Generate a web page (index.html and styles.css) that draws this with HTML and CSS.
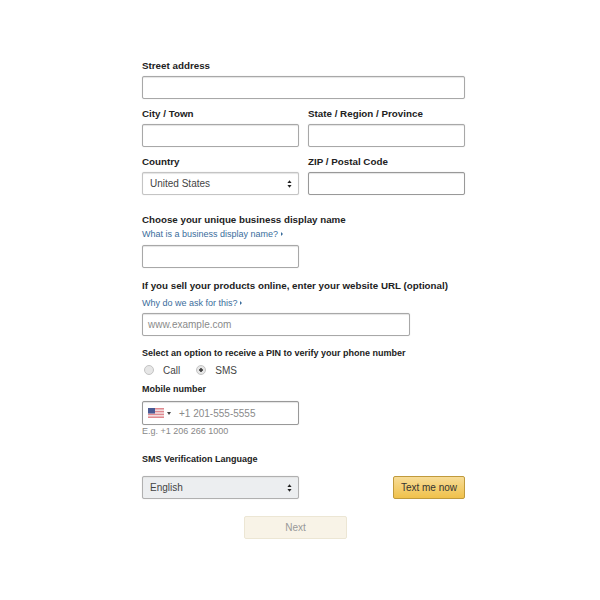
FILE: index.html
```html
<!DOCTYPE html>
<html lang="en">
<head>
<meta charset="UTF-8">
<title>Business address</title>
<link rel="stylesheet" href="styles.css">
</head>
<body>
<form class="form">
  <div class="label label-first">Street address</div>
  <div class="field field-wide"></div>

  <div class="cols">
    <div class="col">
      <div class="label">City / Town</div>
      <div class="field"></div>
    </div>
    <div class="col">
      <div class="label">State / Region / Province</div>
      <div class="field"></div>
    </div>
  </div>

  <div class="cols">
    <div class="col">
      <div class="label">Country</div>
      <div class="field select">United States
        <svg class="updown" viewBox="0 0 6 9"><path d="M3 0 5.5 3.2H.5zM3 9 .5 5.8h5z"/></svg>
      </div>
    </div>
    <div class="col">
      <div class="label">ZIP / Postal Code</div>
      <div class="field field-dark"></div>
    </div>
  </div>

  <div class="heading display-name">Choose your unique business display name</div>
  <a class="help help-tight">What is a business display name? <span class="caret"></span></a>
  <div class="field field-half"></div>

  <div class="heading website">If you sell your products online, enter your website URL (optional)</div>
  <a class="help">Why do we ask for this? <span class="caret"></span></a>
  <div class="field field-url placeholder">www.example.com</div>

  <div class="small-heading pin">Select an option to receive a PIN to verify your phone number</div>
  <div class="radios">
    <span class="radio"></span><span class="radio-text">Call</span>
    <span class="radio radio-on"></span><span class="radio-text">SMS</span>
  </div>

  <div class="small-heading mobile">Mobile number</div>
  <div class="field field-half field-dark phone">
    <svg class="flag" viewBox="0 0 16 10">
      <rect width="16" height="10" fill="#e08a90"/>
      <rect y="1.5" width="16" height="1.4" fill="#f4e6e8"/>
      <rect y="4.3" width="16" height="1.4" fill="#f4e6e8"/>
      <rect y="7.1" width="16" height="1.4" fill="#f4e6e8"/>
      <rect width="7" height="5.5" fill="#4a5a94"/>
    </svg>
    <span class="flag-caret"></span>
    <span class="placeholder">+1 201-555-5555</span>
  </div>
  <div class="hint">E.g. +1 206 266 1000</div>

  <div class="small-heading language">SMS Verification Language</div>
  <div class="lang-row">
    <div class="field field-half select select-grey">English
      <svg class="updown" viewBox="0 0 6 9"><path d="M3 0 5.5 3.2H.5zM3 9 .5 5.8h5z"/></svg>
    </div>
    <button type="button" class="btn-text">Text me now</button>
  </div>

  <div class="next-row">
    <button type="button" class="btn-next">Next</button>
  </div>
</form>
</body>
</html>
```

FILE: styles.css
```css
body {
    margin: 0;
    background: #fff;
    font-family: "Liberation Sans", Arial, sans-serif;
    color: #222;
}
.form {
    width: 323px;
    margin-left: 142px;
    padding-top: 59px;
}
.label {
    font-size: 9.8px;
    font-weight: bold;
    line-height: 13px;
    margin-top: 8px;
    margin-bottom: 4px;
    color: #222;
}
.label-first {
    margin-top: 0;
}
.field {
    box-sizing: border-box;
    height: 23px;
    border: 1px solid #a8a8a8;
    border-radius: 2px;
    background: #fff;
    box-shadow: inset 0 1px 1px #e4e4e4, 0 0 1px #ccc;
    font-size: 10px;
    line-height: 21px;
    padding: 0 7px;
}
.field-dark {
    border-color: #999;
}
.field-half {
    width: 157px;
}
.field-url {
    width: 268px;
    padding: 0 5px;
}
.placeholder {
    color: #8a8a8a;
}
.cols {
    display: flex;
    gap: 9px;
}
.col {
    width: 157px;
}
.select {
    position: relative;
    border-color: #c4c4c4;
    color: #444;
}
.select-grey {
    background: #eceef0;
    border-color: #b0b0b0;
}
.updown {
    position: absolute;
    right: 6px;
    top: 7px;
    width: 5px;
    height: 8px;
    fill: #222;
}
.heading {
    font-size: 9.75px;
    font-weight: bold;
    line-height: 13px;
    color: #222;
}
.display-name {
    margin-top: 18px;
}
.website {
    margin-top: 11px;
}
.help {
    display: block;
    font-size: 9px;
    line-height: 12px;
    color: #3a6d9c;
    margin-top: 5px;
    margin-bottom: 4px;
}
.help-tight {
    margin-top: 2px;
    margin-bottom: 5px;
}
.caret {
    display: inline-block;
    border-left: 2px solid #3a6d9c;
    border-top: 2px solid transparent;
    border-bottom: 2px solid transparent;
    vertical-align: 1px;
}
.small-heading {
    font-size: 9px;
    font-weight: bold;
    line-height: 12px;
    color: #222;
}
.pin {
    margin-top: 11px;
}
.radios {
    display: flex;
    align-items: center;
    height: 14px;
    margin-top: 4px;
    font-size: 10px;
    color: #444;
}
.radio {
    box-sizing: border-box;
    width: 10px;
    height: 10px;
    border-radius: 50%;
    border: 1px solid #c4c4c4;
    background: #e6e6e6;
    margin-left: 2px;
}
.radio-on {
    margin-left: 16px;
    background: radial-gradient(circle, #444 0, #444 1.5px, #e6e6e6 2px);
}
.radio-text {
    margin-left: 9px;
}
.mobile {
    margin-top: 6px;
}
.phone {
    display: flex;
    align-items: center;
    margin-top: 6px;
    height: 24px;
    padding: 0 5px;
}
.flag {
    width: 16px;
    height: 10px;
}
.flag-caret {
    border-top: 3px solid #444;
    border-left: 2px solid transparent;
    border-right: 2px solid transparent;
    margin-left: 3px;
    margin-right: 8px;
}
.hint {
    font-size: 9px;
    line-height: 12px;
    color: #888;
}
.language {
    margin-top: 16px;
}
.lang-row {
    display: flex;
    justify-content: space-between;
    align-items: center;
    margin-top: 11px;
}
.btn-text {
    box-sizing: border-box;
    width: 72px;
    height: 23px;
    padding: 0;
    border: 1px solid #c09a3c;
    border-radius: 2px;
    background: linear-gradient(#f7dc97, #f0c14b);
    font-family: inherit;
    font-size: 10px;
    color: #333;
}
.next-row {
    display: flex;
    justify-content: center;
    margin-top: 17px;
    padding-right: 16px;
}
.btn-next {
    box-sizing: border-box;
    width: 103px;
    height: 23px;
    padding: 0;
    border: 1px solid #ece6d4;
    border-radius: 2px;
    background: #f8f3e7;
    font-family: inherit;
    font-size: 10px;
    color: #999;
}
```
